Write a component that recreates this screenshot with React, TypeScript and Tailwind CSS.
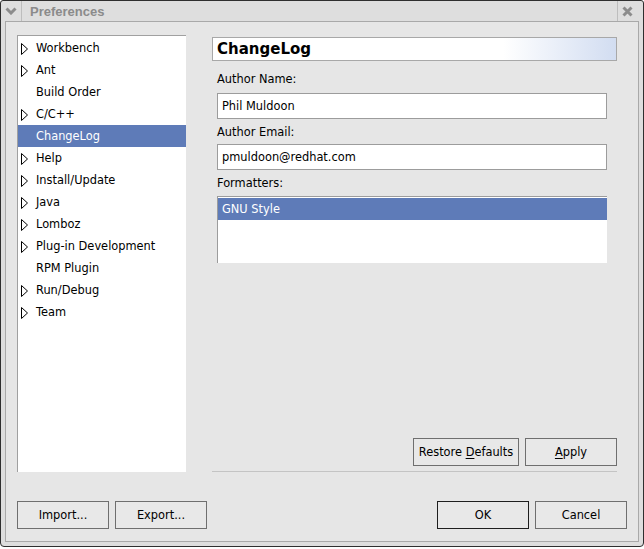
import React from "react";

const Tri = () => (
  <svg width="7" height="12" viewBox="0 0 7 12" className="block">
    <polygon points="0.5,0.5 6.5,6 0.5,11.5" fill="white" stroke="black" strokeWidth="1" />
  </svg>
);

const items: { label: string; exp: boolean; sel?: boolean }[] = [
  { label: "Workbench", exp: true },
  { label: "Ant", exp: true },
  { label: "Build Order", exp: false },
  { label: "C/C++", exp: true },
  { label: "ChangeLog", exp: false, sel: true },
  { label: "Help", exp: true },
  { label: "Install/Update", exp: true },
  { label: "Java", exp: true },
  { label: "Lomboz", exp: true },
  { label: "Plug-in Development", exp: true },
  { label: "RPM Plugin", exp: false },
  { label: "Run/Debug", exp: true },
  { label: "Team", exp: true },
];

function Btn({ children, w = "w-[92px]", dark = false }: { children: React.ReactNode; w?: string; dark?: boolean }) {
  return (
    <div
      className={`${w} h-[28px] flex items-center justify-center pt-[1px] border ${
        dark ? "border-[#1e1e1e]" : "border-[#6f6f6f]"
      } bg-[#e8e8e8] text-[11.4px] text-black`}
    >
      {children}
    </div>
  );
}

export default function App() {
  return (
    <div className="w-[644px] h-[549px] bg-white font-['DejaVu_Sans',sans-serif]">
      <div className="w-[644px] h-[547px] border border-[#2f2f2f] rounded-t-[3px] rounded-b-[4px] bg-[#dedede] flex flex-col overflow-hidden">
        {/* title bar */}
        <div className="h-[20px] flex items-stretch shrink-0">
          <div className="w-[21px] border-r border-[#bdbdbd] flex items-center justify-center">
            <svg width="12" height="8" viewBox="0 0 12 8">
              <polyline points="1.5,1.5 6,6 10.5,1.5" fill="none" stroke="#8c8c8c" strokeWidth="3" />
            </svg>
          </div>
          <div className="flex-1 pl-[8px] pt-[1px] flex items-center font-['Liberation_Sans',sans-serif] font-bold text-[13px] text-[#8b8b8b]">
            Preferences
          </div>
          <div className="w-[20px] border-l border-[#bdbdbd] flex items-center justify-center">
            <svg width="11" height="11" viewBox="0 0 11 11">
              <path d="M1.5 1.5 L9.5 9.5 M9.5 1.5 L1.5 9.5" stroke="#8c8c8c" strokeWidth="3" />
            </svg>
          </div>
          <div className="w-[6px]" />
        </div>
        {/* frame */}
        <div className="flex-1 px-[4px] pb-[4px] flex flex-col">
          <div className="flex-1 border border-[#a9a9a9] bg-[#e6e6e6] flex flex-col">
            <div className="flex pl-[11px] pt-[13px]">
              {/* tree */}
              <div className="w-[169px] h-[437px] bg-white border-l border-t border-[#a0a0a0] pt-[1px]">
                {items.map((it) => (
                  <div
                    key={it.label}
                    className={`h-[22px] flex items-center pl-[3px] pt-[1px] text-[11.4px] ${
                      it.sel ? "bg-[#5e7bb8] text-white" : "text-black"
                    }`}
                  >
                    <div className="w-[15px] flex items-center">{it.exp ? <Tri /> : null}</div>
                    <span>{it.label}</span>
                  </div>
                ))}
              </div>
              {/* right panel */}
              <div className="ml-[26px] w-[405px] h-[437px] flex flex-col pt-[2px]">
                <div className="h-[24px] border border-[#a8a8a8] bg-gradient-to-r from-white from-[72%] to-[#d2ddf1] flex items-center pl-[4px]">
                  <span className="font-bold text-[15px] text-black">ChangeLog</span>
                </div>
                <div className="pl-[5px] pr-[10px]">
                  <div className="mt-[10px] leading-[16px] text-[11.4px]">Author Name:</div>
                  <div className="mt-[6px] h-[26px] bg-white border border-[#9c9c9c] flex items-center pl-[4px] pt-[1px] text-[11.4px]">
                    Phil Muldoon
                  </div>
                  <div className="mt-[5px] leading-[16px] text-[11.4px]">Author Email:</div>
                  <div className="mt-[4px] h-[26px] bg-white border border-[#9c9c9c] flex items-center pl-[4px] pt-[1px] text-[11.4px]">
                    pmuldoon@redhat.com
                  </div>
                  <div className="mt-[5px] leading-[16px] text-[11.4px]">Formatters:</div>
                  <div className="mt-[5px] h-[67px] bg-white border-l border-t border-[#9c9c9c] pt-[1px]">
                    <div className="h-[22px] bg-[#5e7bb8] text-white flex items-center pl-[4px] pt-[1px] text-[11.4px]">GNU Style</div>
                  </div>
                </div>
                <div className="flex-1" />
                <div className="flex justify-end gap-[6px]">
                  <Btn w="w-[106px]">
                    <span>
                      Restore <span className="underline underline-offset-2">D</span>efaults
                    </span>
                  </Btn>
                  <Btn>
                    <span>
                      <span className="underline underline-offset-2">A</span>pply
                    </span>
                  </Btn>
                </div>
                <div className="mt-[5px] h-px bg-[#c4c4c4]" />
              </div>
            </div>
            {/* bottom buttons */}
            <div className="flex pl-[11px] pr-[11px] mt-[29px]">
              <div className="flex gap-[6px]">
                <Btn>Import...</Btn>
                <Btn>Export...</Btn>
              </div>
              <div className="flex-1" />
              <div className="flex gap-[6px]">
                <Btn dark>OK</Btn>
                <Btn>Cancel</Btn>
              </div>
            </div>
          </div>
        </div>
      </div>
    </div>
  );
}
